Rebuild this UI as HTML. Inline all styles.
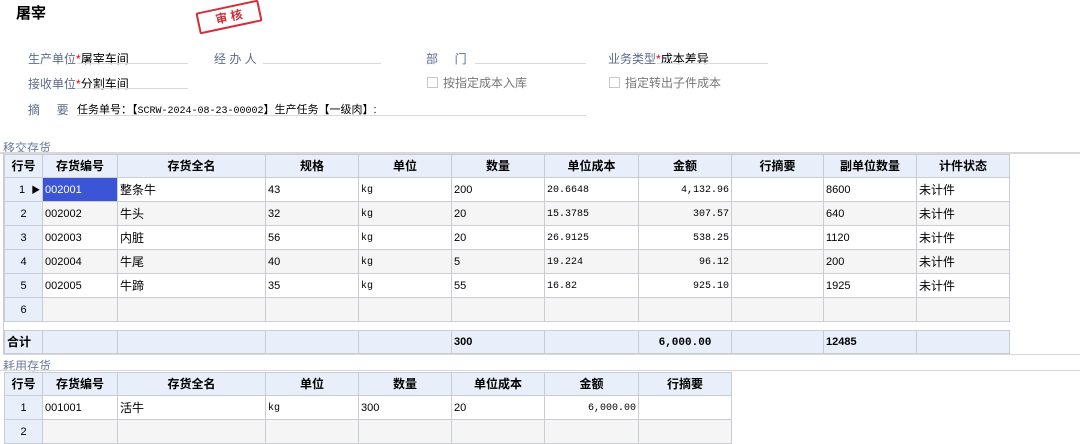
<!DOCTYPE html>
<html><head><meta charset="utf-8"><style>
*{margin:0;padding:0;box-sizing:border-box}
body{width:1080px;height:443px;overflow:hidden;background:#fff;font-family:"Liberation Sans","Noto Sans CJK SC",sans-serif;font-size:12px;color:#000;position:relative}
.a{position:absolute;white-space:nowrap}
.lbl{color:#5b6b8c;font-size:12px}
.ul{position:absolute;height:1px;background:#d5d9e0}
.red{color:#e00}
table{position:absolute;border-collapse:collapse;table-layout:fixed;font-size:11px}
td{border:1px solid #c9cdd3;height:24px;padding:0 2px;white-space:nowrap;overflow:hidden;vertical-align:middle;line-height:14px}
tr.h td{background:#e9effa;font-weight:bold;text-align:center;font-size:12px;height:23px}
td.n{background:#e9effa;text-align:center}
tr.g td{background:#f5f5f5}
tr.g td.n{background:#e9effa}
.r{text-align:right}
.mono{font-family:"Liberation Mono","Noto Sans CJK SC",monospace;font-size:10px}
td.mono{padding-top:2px}
.cb{position:absolute;width:11px;height:11px;border:1px solid #c8c8c8;background:#fff}
</style></head><body>
<div class="a" style="left:16px;top:2px;font-size:15px;font-weight:bold">屠宰</div>
<div class="a" style="left:197px;top:6px;width:64px;height:22px;border:2px solid #d0303a;transform:rotate(-12deg);color:#d0303a;font-weight:bold;font-size:12px;text-align:center;line-height:18px;border-radius:2px">审 核</div>

<div class="a lbl" style="left:28px;top:50px">生产单位<span class="red">*</span><span style="color:#000">屠宰车间</span></div>
<div class="ul" style="left:77px;top:63px;width:111px"></div>
<div class="a lbl" style="left:214px;top:50px">经 办 人</div>
<div class="ul" style="left:263px;top:63px;width:118px"></div>
<div class="a lbl" style="left:426px;top:50px">部&nbsp;&nbsp;&nbsp;&nbsp;&nbsp;门</div>
<div class="ul" style="left:475px;top:63px;width:111px"></div>
<div class="a lbl" style="left:608px;top:50px">业务类型<span class="red">*</span><span style="color:#000">成本差异</span></div>
<div class="ul" style="left:657px;top:63px;width:111px"></div>

<div class="a lbl" style="left:28px;top:75px">接收单位<span class="red">*</span><span style="color:#000">分割车间</span></div>
<div class="ul" style="left:77px;top:88px;width:111px"></div>
<div class="cb" style="left:427px;top:77px"></div>
<div class="a lbl" style="left:443px;top:74px;color:#777">按指定成本入库</div>
<div class="cb" style="left:609px;top:77px"></div>
<div class="a lbl" style="left:625px;top:74px;color:#777">指定转出子件成本</div>

<div class="a lbl" style="left:28px;top:101px">摘&nbsp;&nbsp;&nbsp;&nbsp;&nbsp;要</div>
<div class="a" style="left:77px;top:101px;font-size:11px">任务单号：【<span class="mono">SCRW-2024-08-23-00002</span>】生产任务【一级肉】:</div>
<div class="ul" style="left:77px;top:115px;width:509px"></div>

<div class="a lbl" style="left:3px;top:139px;color:#6a7a9a">移交存货</div>
<div class="a" style="left:0;top:152px;width:1080px;height:2px;background:#d8d8d8"></div>
<div class="a" style="left:3px;top:152px;width:1077px;height:203px;border-left:1px solid #c9cdd3;border-bottom:1px solid #d8d8d8"></div>

<table style="left:4px;top:154px;width:1005px">
<colgroup><col style="width:38px"><col style="width:75px"><col style="width:148px"><col style="width:93px"><col style="width:93px"><col style="width:93px"><col style="width:94px"><col style="width:93px"><col style="width:92px"><col style="width:93px"><col style="width:93px"></colgroup>
<tr class="h"><td>行号</td><td>存货编号</td><td>存货全名</td><td>规格</td><td>单位</td><td>数量</td><td>单位成本</td><td>金额</td><td>行摘要</td><td>副单位数量</td><td>计件状态</td></tr>
<tr><td class="n" style="text-align:left;padding-left:14px">1 <span style="font-size:9px;margin-left:3px">▶</span></td><td style="background:#3c55d6;color:#fff">002001</td><td style="font-size:12px">整条牛</td><td>43</td><td class="mono">kg</td><td>200</td><td class="mono">20.6648</td><td class="r mono">4,132.96</td><td></td><td>8600</td><td style="font-size:12px">未计件</td></tr>
<tr class="g"><td class="n">2</td><td>002002</td><td style="font-size:12px">牛头</td><td>32</td><td class="mono">kg</td><td>20</td><td class="mono">15.3785</td><td class="r mono">307.57</td><td></td><td>640</td><td style="font-size:12px">未计件</td></tr>
<tr><td class="n">3</td><td>002003</td><td style="font-size:12px">内脏</td><td>56</td><td class="mono">kg</td><td>20</td><td class="mono">26.9125</td><td class="r mono">538.25</td><td></td><td>1120</td><td style="font-size:12px">未计件</td></tr>
<tr class="g"><td class="n">4</td><td>002004</td><td style="font-size:12px">牛尾</td><td>40</td><td class="mono">kg</td><td>5</td><td class="mono">19.224</td><td class="r mono">96.12</td><td></td><td>200</td><td style="font-size:12px">未计件</td></tr>
<tr><td class="n">5</td><td>002005</td><td style="font-size:12px">牛蹄</td><td>35</td><td class="mono">kg</td><td>55</td><td class="mono">16.82</td><td class="r mono">925.10</td><td></td><td>1925</td><td style="font-size:12px">未计件</td></tr>
<tr class="g"><td class="n">6</td><td></td><td></td><td></td><td></td><td></td><td></td><td></td><td></td><td></td><td></td></tr>
<tr><td colspan="11" style="height:9px;border-left:none;border-right:none"></td></tr>
<tr class="h"><td style="text-align:left">合计</td><td></td><td></td><td></td><td></td><td style="text-align:left;font-size:11px">300</td><td></td><td class="r mono" style="font-weight:bold;font-size:11px">6,000.00</td><td></td><td style="text-align:left;font-size:11px">12485</td><td></td></tr>
</table>

<div class="a lbl" style="left:3px;top:357px;color:#6a7a9a">耗用存货</div>
<div class="a" style="left:0;top:370px;width:1080px;height:1px;background:#d8d8d8"></div>
<table style="left:4px;top:372px;width:727px">
<colgroup><col style="width:38px"><col style="width:75px"><col style="width:148px"><col style="width:93px"><col style="width:93px"><col style="width:93px"><col style="width:94px"><col style="width:93px"></colgroup>
<tr class="h"><td>行号</td><td>存货编号</td><td>存货全名</td><td>单位</td><td>数量</td><td>单位成本</td><td>金额</td><td>行摘要</td></tr>
<tr><td class="n">1</td><td>001001</td><td style="font-size:12px">活牛</td><td class="mono">kg</td><td>300</td><td>20</td><td class="r mono">6,000.00</td><td></td></tr>
<tr class="g"><td class="n">2</td><td></td><td></td><td></td><td></td><td></td><td></td><td></td></tr>
</table>
</body></html>
